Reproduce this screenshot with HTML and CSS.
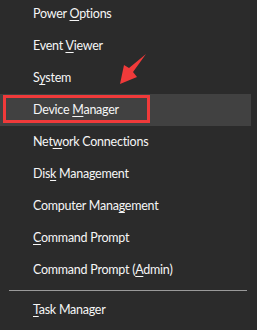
FILE: index.html
```html
<!DOCTYPE html>
<html>
<head>
    <title>Quick Link Menu</title>
    <link rel="stylesheet" href="styles.css">
</head>
<body>
    <div class="menu">
        <div class="item">Power <u>O</u>ptions</div>
        <div class="item">Event <u>V</u>iewer</div>
        <div class="item">S<u>y</u>stem</div>
        <div class="item active">Device <u>M</u>anager</div>
        <div class="item">Net<u>w</u>ork Connections</div>
        <div class="item">Dis<u>k</u> Management</div>
        <div class="item">Computer Mana<u>g</u>ement</div>
        <div class="item"><u>C</u>ommand Prompt</div>
        <div class="item">Command Prompt (<u>A</u>dmin)</div>
        <div class="separator"></div>
        <div class="item"><u>T</u>ask Manager</div>

        <div class="mark"></div>
        <svg class="arrow" width="40" height="40" viewBox="0 0 40 40">
            <polygon points="26,0 13,18 17,23 0,30 4,11 9,14" fill="#f03a3a"/>
        </svg>
    </div>
</body>
</html>
```

FILE: styles.css
```css
body { margin: 0; background-color: #2b2b2b; font-family: 'Lato', 'Open Sans', sans-serif; }
.menu { position: relative; margin-top: -2px; width: 251px; }
.item {
    height: 32px;
    line-height: 32px;
    padding-left: 33px;
    color: #f6f6f6;
    font-size: 12.5px;
    letter-spacing: -0.25px;
    white-space: nowrap;
}
.item u { text-underline-offset: 2px; }
.item.active { background-color: #414141; }
.separator { height: 1px; margin: 4px 4px 3px 9px; background-color: #9a9a9a; }
.mark {
    position: absolute;
    left: 3px;
    top: 97px;
    width: 141px;
    height: 22px;
    border: 3px solid #f03a3a;
}
.arrow { position: absolute; left: 120px; top: 56px; }
```
